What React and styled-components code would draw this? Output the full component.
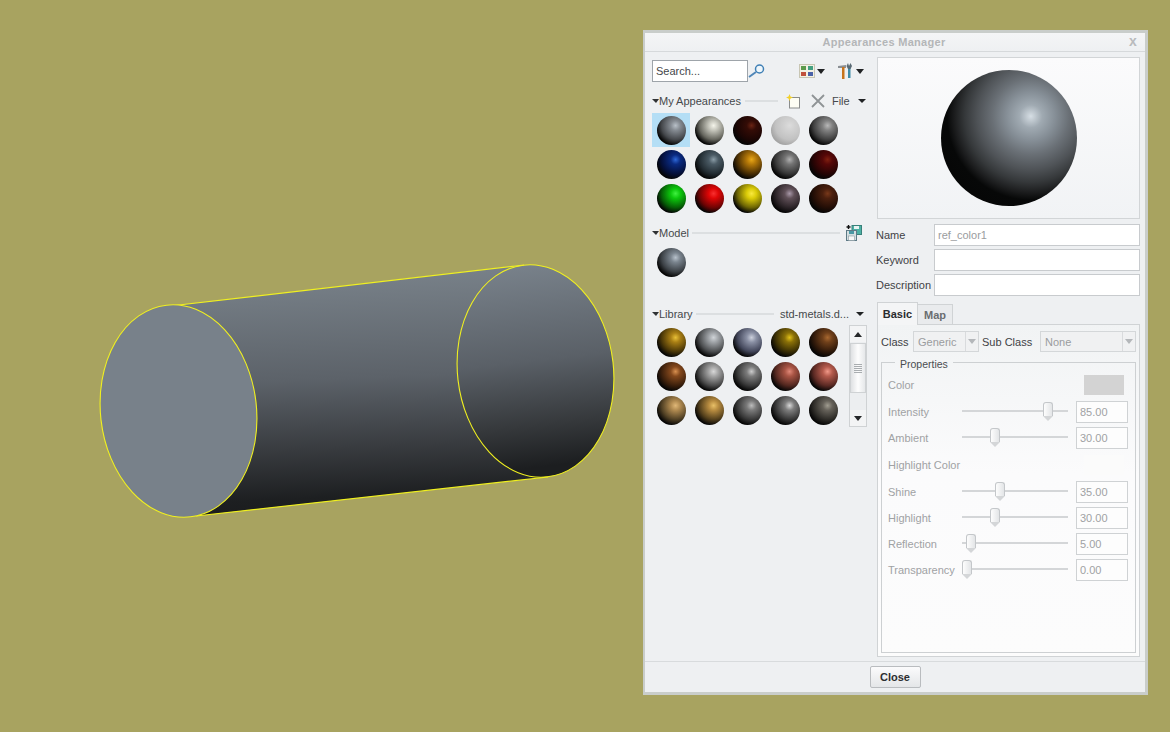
import { createGlobalStyle, styled } from "styled-components";

const GlobalStyle = createGlobalStyle`
  html, body {
    margin: 0;
    padding: 0;
    background: #a8a360;
  }
  body {
    font-family: "Liberation Sans", Arial, sans-serif;
    font-size: 11px;
    color: #3c3f42;
  }
`;

const Desktop = styled.div`
  position: relative;
  width: 1170px;
  height: 732px;
  overflow: hidden;
  background: #a8a360;
`;

const Viewport = styled.svg`
  position: absolute;
  left: 0;
  top: 0;
`;

const Dialog = styled.div`
  position: absolute;
  left: 643px;
  top: 30px;
  width: 505px;
  height: 665px;
  box-sizing: border-box;
  border: 3px solid #c9cdca;
  border-left-width: 2px;
  display: flex;
  flex-direction: column;
  background: #eef0f2;
`;

const TitleBar = styled.div`
  height: 19px;
  flex: none;
  box-sizing: border-box;
  padding-right: 22px;
  display: flex;
  align-items: center;
  justify-content: center;
  position: relative;
  background: linear-gradient(#f4f5f6, #eef0f2);
  border-bottom: 1px solid #d6d9db;
  font-weight: bold;
  font-size: 11px;
  letter-spacing: 0.3px;
  color: #b4b6b8;
`;

const CloseX = styled.span`
  position: absolute;
  right: 8px;
  top: 0;
  font-size: 14px;
  font-weight: bold;
  color: #b9bbbd;
`;

const Body = styled.div`
  flex: 1;
  display: flex;
  min-height: 0;
`;

const LeftColumn = styled.div`
  width: 232px;
  flex: none;
  box-sizing: border-box;
  padding: 8px 0 0 7px;
`;

const RightColumn = styled.div`
  width: 268px;
  flex: none;
  box-sizing: border-box;
  padding: 5px 5px 0 0;
  display: flex;
  flex-direction: column;
`;

const SearchRow = styled.div`
  display: flex;
  align-items: center;
  height: 22px;
`;

const SearchInput = styled.div`
  width: 96px;
  height: 22px;
  box-sizing: border-box;
  border: 1px solid #9ea4aa;
  background: #fff;
  padding-left: 3px;
  line-height: 20px;
  color: #45484b;
`;

const ToolIcon = styled.span`
  display: inline-flex;
  align-items: center;
  margin-left: ${(p) => p.$left || 0}px;
  margin-right: ${(p) => p.$right || 0}px;
`;

const Caret = styled.span`
  width: 0;
  height: 0;
  margin-left: ${(p) => p.$left ?? 2}px;
  border-left: 4px solid transparent;
  border-right: 4px solid transparent;
  border-top: ${(p) => (p.$small ? 4 : 5)}px solid #202224;
`;

const SectionHeader = styled.div`
  display: flex;
  align-items: center;
  height: 14px;
  margin-top: ${(p) => p.$top}px;
  width: 212px;
`;

const Collapse = styled.span`
  width: 0;
  height: 0;
  border-left: 4px solid transparent;
  border-right: 3px solid transparent;
  border-top: 4px solid #303234;
`;

const HeaderLabel = styled.span`
  margin-left: ${(p) => p.$left || 0}px;
  color: #45484b;
  white-space: nowrap;
`;

const Rule = styled.span`
  height: 2px;
  flex: ${(p) => (p.$width ? "none" : 1)};
  width: ${(p) => p.$width || 0}px;
  margin: 0 6px 0 ${(p) => p.$left ?? 3}px;
  background: #dcdfe1;
`;

const SphereGrid = styled.div`
  display: grid;
  grid-template-columns: repeat(5, 38px);
  grid-auto-rows: 34px;
  margin-top: ${(p) => p.$top}px;
  width: 190px;
`;

const Cell = styled.div`
  display: flex;
  align-items: center;
  justify-content: center;
  background: ${(p) => (p.$selected ? "#b4def5" : "transparent")};
`;

const Sphere = styled.div`
  width: 29px;
  height: 29px;
  border-radius: 50%;
  background:
    radial-gradient(circle at 64% 33%, ${(p) => p.$hi} 0, ${(p) => p.$base} 18%, ${(p) => p.$mid} 52%, ${(p) => p.$rim} 74%);
`;

const LibraryRow = styled.div`
  display: flex;
  align-items: flex-start;
  position: relative;
  width: 216px;
  margin-top: 4px;
`;

const ScrollBar = styled.div`
  position: absolute;
  left: 197px;
  top: 0;
  width: 18px;
  height: 102px;
  box-sizing: border-box;
  border: 1px solid #cfd2d4;
  background: #eceef0;
  display: flex;
  flex-direction: column;
  justify-content: space-between;
`;

const ScrollArrow = styled.div`
  height: 16px;
  display: flex;
  align-items: center;
  justify-content: center;
  background: #f3f4f5;
`;

const ArrowUp = styled.span`
  width: 0;
  height: 0;
  border-left: 4px solid transparent;
  border-right: 4px solid transparent;
  border-bottom: 5px solid #26282a;
`;

const ArrowDown = styled.span`
  width: 0;
  height: 0;
  border-left: 4px solid transparent;
  border-right: 4px solid transparent;
  border-top: 5px solid #26282a;
`;

const ScrollThumb = styled.div`
  position: absolute;
  left: 0;
  top: 17px;
  width: 14px;
  height: 48px;
  border: 1px solid #cfd2d4;
  background: linear-gradient(90deg, #dfe1e3, #fdfdfd 50%, #e6e8ea);
  display: flex;
  flex-direction: column;
  align-items: center;
  justify-content: center;
  gap: 1px;
`;

const Grip = styled.span`
  width: 8px;
  height: 1px;
  background: #a9adb0;
`;

const Preview = styled.div`
  height: 162px;
  flex: none;
  box-sizing: border-box;
  border: 1px solid #d2d5d7;
  background: linear-gradient(#fbfbfc, #f1f3f5);
  display: flex;
  align-items: center;
  justify-content: center;
`;

const BigSphere = styled.div`
  width: 136px;
  height: 136px;
  border-radius: 50%;
  background: radial-gradient(circle at 66% 34%, #d6dee4 0, #a0aab2 9%, #868f97 19%, #6a7076 30%, #4f5357 42%, #35383a 52%, #1c1d1e 60%, #070808 66%, #040404 100%);
`;

const FieldRow = styled.div`
  display: flex;
  align-items: center;
  height: 22px;
  margin-top: ${(p) => p.$top ?? 3}px;
`;

const FieldLabel = styled.span`
  width: 58px;
  margin-left: -1px;
  flex: none;
  color: #3f4245;
  white-space: nowrap;
`;

const TextField = styled.div`
  flex: 1;
  height: 22px;
  box-sizing: border-box;
  border: 1px solid #c8cbce;
  background: #fff;
  padding-left: 3px;
  line-height: 20px;
  color: #9a9c9e;
`;

const Tabs = styled.div`
  display: flex;
  align-items: flex-end;
  margin-top: 6px;
  height: 23px;
  flex: none;
  position: relative;
  z-index: 1;
`;

const Tab = styled.div`
  box-sizing: border-box;
  width: ${(p) => p.$width}px;
  height: ${(p) => (p.$active ? 23 : 21)}px;
  display: flex;
  align-items: center;
  justify-content: center;
  border: 1px solid #d0d3d5;
  border-bottom: ${(p) => (p.$active ? "none" : "1px solid #d0d3d5")};
  border-left: ${(p) => (p.$active ? "1px solid #d0d3d5" : "none")};
  background: ${(p) => (p.$active ? "#f4f5f6" : "#e9ebed")};
  font-weight: bold;
  color: ${(p) => (p.$active ? "#2a2c2e" : "#6a6d70")};
`;

const TabPanel = styled.div`
  height: 333px;
  flex: none;
  margin-top: -1px;
  box-sizing: border-box;
  border: 1px solid #d0d3d5;
  background: linear-gradient(#f1f3f4, #fbfbfc 45%, #fcfcfc);
  padding: 6px 3px 3px;
`;

const ClassRow = styled.div`
  display: flex;
  align-items: center;
  height: 21px;
`;

const ClassLabel = styled.span`
  margin-left: ${(p) => p.$left || 0}px;
  width: ${(p) => p.$width}px;
  flex: none;
  white-space: nowrap;
  color: #3f4245;
`;

const Select = styled.div`
  width: ${(p) => p.$width}px;
  height: 21px;
  flex: none;
  box-sizing: border-box;
  border: 1px solid #d4d7d9;
  background: #f0f1f2;
  display: flex;
  align-items: center;
  justify-content: space-between;
  padding-left: 4px;
  color: #9a9c9e;
`;

const SelectArrow = styled.span`
  width: 13px;
  height: 19px;
  box-sizing: border-box;
  border-left: 1px solid #d9dbdd;
  display: flex;
  align-items: center;
  justify-content: center;
  &::after {
    content: "";
    border-left: 4px solid transparent;
    border-right: 4px solid transparent;
    border-top: 5px solid #b4b7ba;
  }
`;

const Fieldset = styled.fieldset`
  margin: 5px 0 0 0;
  padding: 0;
  width: 255px;
  height: 296px;
  box-sizing: border-box;
  border: 1px solid #cdd0d2;
  min-inline-size: 0;
`;

const Legend = styled.legend`
  position: relative;
  top: 2px;
  margin-left: 13px;
  padding: 0 5px;
  font-size: 10.5px;
  line-height: 10px;
  color: #4a4d50;
`;

const PropRow = styled.div`
  display: flex;
  align-items: center;
  height: 22px;
  margin-top: ${(p) => p.$top}px;
  padding-left: 6px;
`;

const PropLabel = styled.span`
  width: 74px;
  flex: none;
  color: #a0a2a4;
  white-space: nowrap;
`;

const ColorSwatch = styled.div`
  width: 40px;
  height: 20px;
  margin-left: auto;
  margin-right: 11px;
  background: ${(p) => p.$color};
`;

const Slider = styled.div`
  position: relative;
  width: 106px;
  height: 2px;
  flex: none;
  margin-bottom: 2px;
  background: #d4d6d8;
`;

const Thumb = styled.span`
  position: absolute;
  top: -8px;
  left: ${(p) => p.$at}px;
  width: 10px;
  height: 14px;
  box-sizing: border-box;
  margin-left: -5px;
  border: 1px solid #c4c7ca;
  border-bottom: none;
  border-radius: 3px 3px 0 0;
  background: linear-gradient(90deg, #fdfdfd, #e3e5e7);
  &::after {
    content: "";
    position: absolute;
    left: -1px;
    top: 13px;
    border-left: 5px solid transparent;
    border-right: 5px solid transparent;
    border-top: 5px solid #d4d6d8;
  }
`;

const NumberBox = styled.div`
  width: 52px;
  height: 22px;
  margin-left: 8px;
  box-sizing: border-box;
  border: 1px solid #cfd2d4;
  background: #fdfdfd;
  padding-left: 3px;
  line-height: 20px;
  color: #a0a2a4;
`;

const Footer = styled.div`
  height: 31px;
  flex: none;
  box-sizing: border-box;
  border-top: 1px solid #d8dbdd;
  display: flex;
  align-items: center;
  justify-content: center;
`;

const CloseButton = styled.button`
  width: 51px;
  height: 22px;
  padding: 0;
  border: 1px solid #b9bcbf;
  border-radius: 2px;
  background: linear-gradient(#fbfbfc, #e4e6e8);
  font-family: inherit;
  font-size: 11px;
  font-weight: bold;
  color: #2c2e30;
`;

const myAppearances = [
  ["#b8c0c8", "#858b92", "#45484c"],
  ["#f4f4ea", "#c6c6bc", "#66665e"],
  ["#6a2414", "#340c06", "#1c0604"],
  ["#dcdcdc", "#d2d2d2", "#c2c2c2", "#a4a4a4"],
  ["#b8b8b8", "#828282", "#404040"],
  ["#2e68d8", "#0a2a80", "#04103c"],
  ["#8a9ca6", "#4a5a64", "#222c32"],
  ["#e8a818", "#b47808", "#4c3004"],
  ["#b0b0b0", "#747474", "#383838"],
  ["#802010", "#560808", "#280404"],
  ["#40f040", "#0cc80c", "#066006"],
  ["#f83030", "#e00606", "#700404"],
  ["#f8e840", "#dccc08", "#6e6604"],
  ["#a898a8", "#605058", "#2c2428"],
  ["#78381a", "#4c200e", "#240e06"],
];

const library = [
  ["#e8c038", "#a87e14", "#4c3808"],
  ["#d0d4d8", "#a0a4a8", "#4c4e50"],
  ["#ccd0dc", "#8a90a4", "#42465a"],
  ["#e0c018", "#8a7008", "#3c3004"],
  ["#a86830", "#70401a", "#30190a"],
  ["#d89050", "#84481c", "#3c200c"],
  ["#d8d8d8", "#a4a4a4", "#4c4c4c"],
  ["#cccccc", "#7c7c7c", "#3a3a3a"],
  ["#e08878", "#a85444", "#542820"],
  ["#f09888", "#b45a4c", "#5c2a24"],
  ["#e0b878", "#b08a50", "#504024"],
  ["#e8c068", "#b88c40", "#54401c"],
  ["#bcbcbc", "#7a7a7a", "#383838"],
  ["#d8d8d8", "#7e7e7e", "#363636"],
  ["#a09c90", "#66625a", "#2e2c28"],
];

const upperProperties = [
  { label: "Intensity", at: 86, value: "85.00", top: 5 },
  { label: "Ambient", at: 33, value: "30.00", top: 4 },
];

const lowerProperties = [
  { label: "Shine", at: 38, value: "35.00", top: 5 },
  { label: "Highlight", at: 33, value: "30.00", top: 4 },
  { label: "Reflection", at: 9, value: "5.00", top: 4 },
  { label: "Transparency", at: 5, value: "0.00", top: 4 },
];

const Cylinder = () => (
  <Viewport width="640" height="732" viewBox="0 0 640 732">
    <defs>
      <linearGradient id="barrel" x1="0.47" y1="0" x2="0.53" y2="1">
        <stop offset="0" stopColor="#7a838b" />
        <stop offset="0.45" stopColor="#5c6269" />
        <stop offset="0.72" stopColor="#393c40" />
        <stop offset="0.92" stopColor="#1d1f21" />
        <stop offset="1" stopColor="#1a1b1d" />
      </linearGradient>
      <linearGradient id="endcap" x1="0" y1="0" x2="0" y2="1">
        <stop offset="0" stopColor="#78818a" />
        <stop offset="0.45" stopColor="#5a6067" />
        <stop offset="0.75" stopColor="#36393c" />
        <stop offset="0.95" stopColor="#1c1e20" />
      </linearGradient>
    </defs>
    <path d="M170 306 L520 265 L548 477 L196 516 Z" fill="url(#barrel)" />
    <ellipse cx="535.5" cy="371" rx="78" ry="106.5" transform="rotate(-6.5 535.5 371)" fill="url(#endcap)" stroke="#f0f020" strokeWidth="1.1" />
    <line x1="170" y1="306" x2="524" y2="265" stroke="#f0f020" strokeWidth="1.2" />
    <line x1="196" y1="516" x2="548" y2="477" stroke="#f0f020" strokeWidth="1.2" />
    <ellipse cx="178.5" cy="411" rx="78" ry="106.5" transform="rotate(-6.5 178.5 411)" fill="#78818a" stroke="#f0f020" strokeWidth="1.1" />
  </Viewport>
);

const MagnifierIcon = () => (
  <svg width="18" height="16" viewBox="0 0 18 16">
    <line x1="1" y1="14" x2="8" y2="9" stroke="#4f86b8" strokeWidth="2" />
    <circle cx="11.5" cy="6" r="4" fill="#eef6fb" stroke="#3f7fb5" strokeWidth="1.5" />
  </svg>
);

const ViewIcon = () => (
  <svg width="16" height="14" viewBox="0 0 16 14">
    <rect x="0.5" y="0.5" width="15" height="13" fill="#f2f0e4" stroke="#c8c6b4" />
    <rect x="2" y="2" width="5" height="4" fill="#5c9a4c" />
    <rect x="9" y="2" width="5" height="4" fill="#44a080" />
    <rect x="2" y="8" width="5" height="4" fill="#c0503c" />
    <rect x="9" y="8" width="5" height="4" fill="#4a62a8" />
  </svg>
);

const ToolsIcon = () => (
  <svg width="16" height="16" viewBox="0 0 16 16">
    <path d="M0 3 L8 2 L8 5 L0 5 Z" fill="#8a8f94" />
    <rect x="4" y="4" width="2.5" height="12" fill="#c8741c" />
    <rect x="10" y="4" width="2.5" height="11" fill="#3f8ca8" />
    <path d="M8.5 3 L10 0 L11 3 L12.5 0 L14 3 L12.5 6 L10 6 Z" fill="#5a6a74" />
  </svg>
);

const NewIcon = () => (
  <svg width="15" height="15" viewBox="0 0 15 15">
    <rect x="3.5" y="3.5" width="10" height="10.5" fill="#fdfdf4" stroke="#8a8c8c" />
    <path d="M3.5 0 L4.5 2.5 L7 3.5 L4.5 4.5 L3.5 7 L2.5 4.5 L0 3.5 L2.5 2.5 Z" fill="#f2d02c" />
  </svg>
);

const DeleteIcon = () => (
  <svg width="14" height="14" viewBox="0 0 14 14">
    <path d="M1 1 L13 13 M13 1 L1 13" stroke="#8f9396" strokeWidth="1.8" />
  </svg>
);

const SaveIcon = () => (
  <svg width="16" height="16" viewBox="0 0 16 16">
    <path d="M0.5 2 H4.5 M2.5 0 V4" stroke="#111" strokeWidth="1.4" />
    <rect x="6" y="0.5" width="9.5" height="9" fill="#4cb0a4" stroke="#38807a" />
    <rect x="8" y="1" width="5" height="3" fill="#e8f4f2" />
    <rect x="0.5" y="5.5" width="10" height="10" fill="#d4dee0" stroke="#5e7a86" />
    <rect x="3" y="6" width="5" height="3" fill="#4a98a4" />
    <rect x="2.5" y="11" width="6" height="4.5" fill="#f8f8f8" stroke="#7a8c94" strokeWidth="0.5" />
  </svg>
);

const SphereCell = ({ colors, selected }) => (
  <Cell $selected={selected}>
    <Sphere $hi={colors[0]} $base={colors[1]} $mid={colors[2]} $rim={colors[3] || "#050505"} />
  </Cell>
);

const SliderRow = ({ item }) => (
  <PropRow $top={item.top}>
    <PropLabel>{item.label}</PropLabel>
    <Slider>
      <Thumb $at={item.at} />
    </Slider>
    <NumberBox>{item.value}</NumberBox>
  </PropRow>
);

const App = () => (
  <Desktop>
    <GlobalStyle />
    <Cylinder />
    <Dialog>
      <TitleBar>
        Appearances Manager
        <CloseX>x</CloseX>
      </TitleBar>
      <Body>
        <LeftColumn>
          <SearchRow>
            <SearchInput>Search...</SearchInput>
            <MagnifierIcon />
            <ToolIcon $left={33}>
              <ViewIcon />
              <Caret />
            </ToolIcon>
            <ToolIcon $left={13}>
              <ToolsIcon />
              <Caret />
            </ToolIcon>
          </SearchRow>
          <SectionHeader $top={12}>
            <Collapse />
            <HeaderLabel>My Appearances</HeaderLabel>
            <Rule $width={33} $left={4} />
            <ToolIcon $left={2}>
              <NewIcon />
            </ToolIcon>
            <ToolIcon $left={10}>
              <DeleteIcon />
            </ToolIcon>
            <HeaderLabel $left={7}>File</HeaderLabel>
            <Caret $left={8} $small />
          </SectionHeader>
          <SphereGrid $top={5}>
            {myAppearances.map((c, i) => (
              <SphereCell key={i} colors={c} selected={i === 0} />
            ))}
          </SphereGrid>
          <SectionHeader $top={11}>
            <Collapse />
            <HeaderLabel>Model</HeaderLabel>
            <Rule />
            <ToolIcon $right={2}>
              <SaveIcon />
            </ToolIcon>
          </SectionHeader>
          <SphereGrid $top={5}>
            <SphereCell colors={["#b8c2cc", "#7a848e", "#3c4146"]} />
          </SphereGrid>
          <SectionHeader $top={28}>
            <Collapse />
            <HeaderLabel>Library</HeaderLabel>
            <Rule />
            <HeaderLabel>std-metals.d...</HeaderLabel>
            <Caret $left={7} $small />
          </SectionHeader>
          <LibraryRow>
            <SphereGrid $top={0}>
              {library.map((c, i) => (
                <SphereCell key={i} colors={c} />
              ))}
            </SphereGrid>
            <ScrollBar>
              <ScrollArrow>
                <ArrowUp />
              </ScrollArrow>
              <ScrollThumb>
                <Grip />
                <Grip />
                <Grip />
                <Grip />
                <Grip />
              </ScrollThumb>
              <ScrollArrow>
                <ArrowDown />
              </ScrollArrow>
            </ScrollBar>
          </LibraryRow>
        </LeftColumn>
        <RightColumn>
          <Preview>
            <BigSphere />
          </Preview>
          <FieldRow $top={5}>
            <FieldLabel>Name</FieldLabel>
            <TextField>ref_color1</TextField>
          </FieldRow>
          <FieldRow>
            <FieldLabel>Keyword</FieldLabel>
            <TextField />
          </FieldRow>
          <FieldRow>
            <FieldLabel>Description</FieldLabel>
            <TextField />
          </FieldRow>
          <Tabs>
            <Tab $active $width={41}>Basic</Tab>
            <Tab $width={35}>Map</Tab>
          </Tabs>
          <TabPanel>
            <ClassRow>
              <ClassLabel $width={32}>Class</ClassLabel>
              <Select $width={66}>
                Generic
                <SelectArrow />
              </Select>
              <ClassLabel $left={3} $width={58}>Sub Class</ClassLabel>
              <Select $width={96}>
                None
                <SelectArrow />
              </Select>
            </ClassRow>
            <Fieldset>
              <Legend>Properties</Legend>
              <PropRow $top={7}>
                <PropLabel>Color</PropLabel>
                <ColorSwatch $color="#d3d3d3" />
              </PropRow>
              {upperProperties.map((p) => (
                <SliderRow key={p.label} item={p} />
              ))}
              <PropRow $top={5}>
                <PropLabel>Highlight Color</PropLabel>
                <ColorSwatch $color="#fbfbfb" />
              </PropRow>
              {lowerProperties.map((p) => (
                <SliderRow key={p.label} item={p} />
              ))}
            </Fieldset>
          </TabPanel>
        </RightColumn>
      </Body>
      <Footer>
        <CloseButton>Close</CloseButton>
      </Footer>
    </Dialog>
  </Desktop>
);

export default App;
